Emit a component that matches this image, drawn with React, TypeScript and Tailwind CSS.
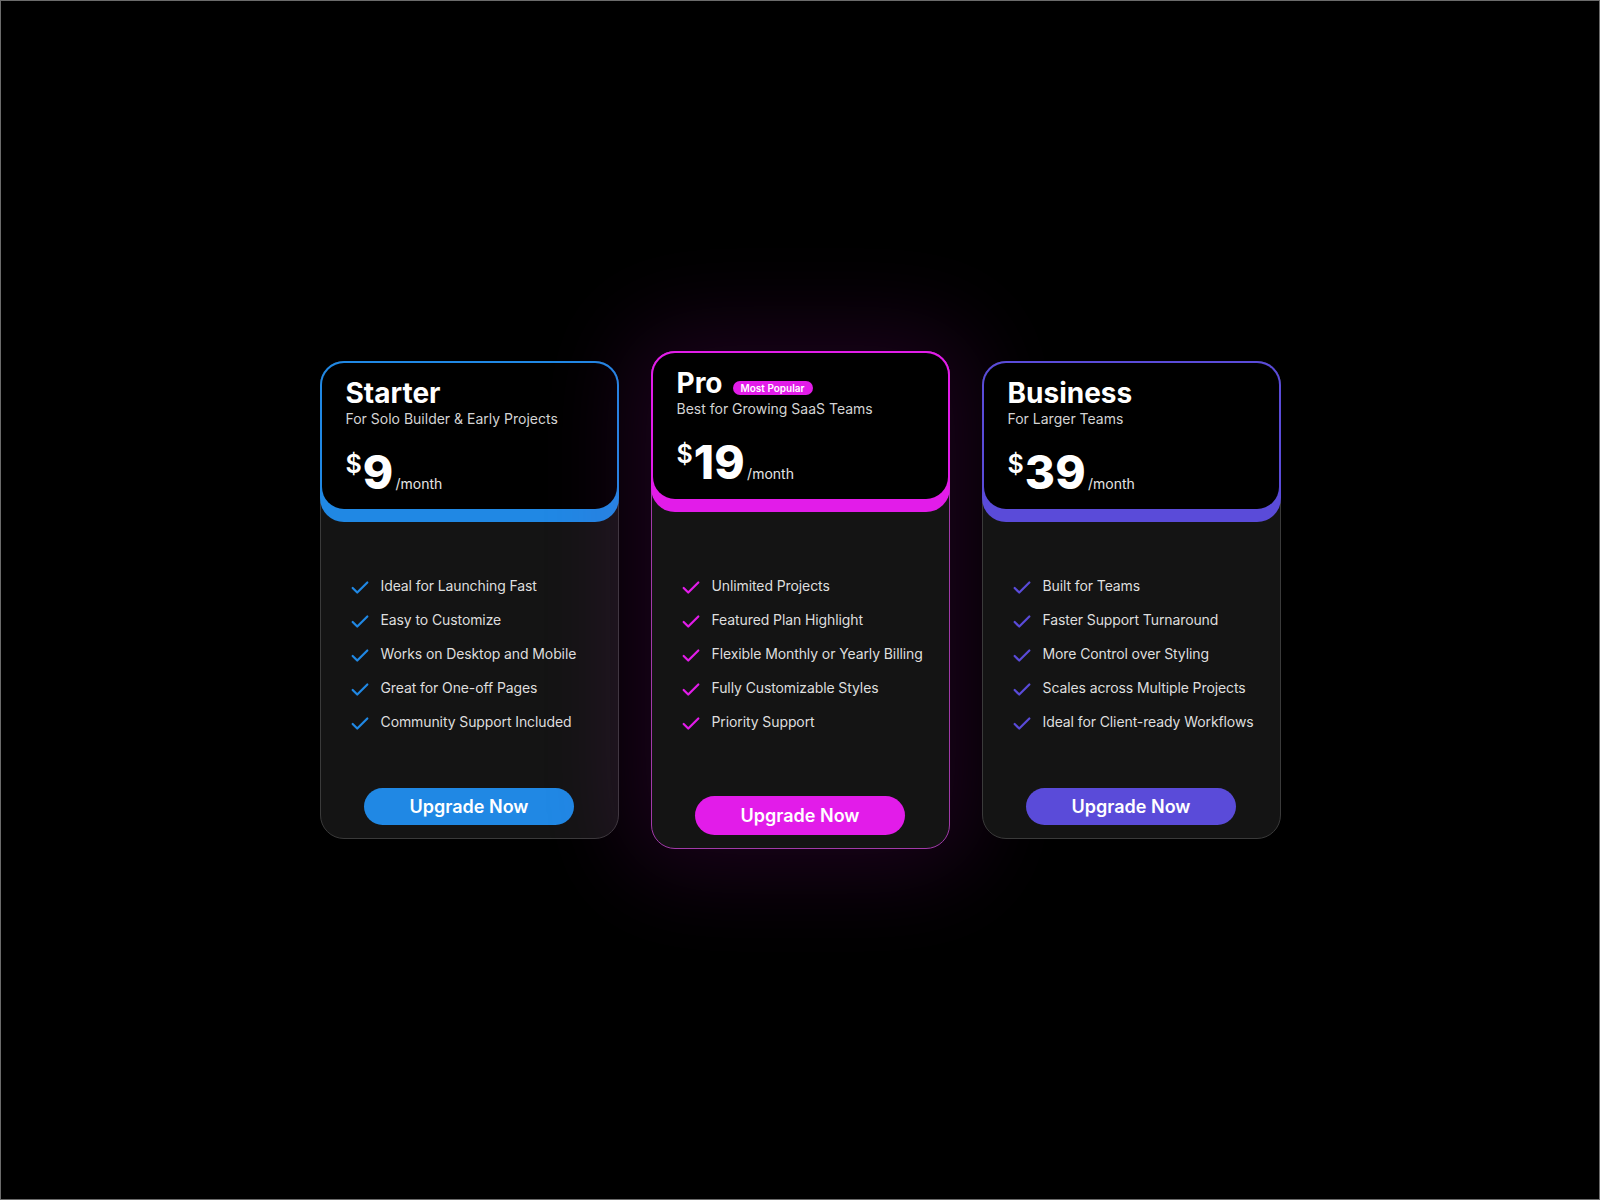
import { Check } from "lucide-react";

type Plan = {
  name: string;
  tagline: string;
  price: string;
  features: string[];
  popular?: boolean;
};

const plans: Plan[] = [
  {
    name: "Starter",
    tagline: "For Solo Builder & Early Projects",
    price: "9",
    features: [
      "Ideal for Launching Fast",
      "Easy to Customize",
      "Works on Desktop and Mobile",
      "Great for One-off Pages",
      "Community Support Included",
    ],
  },
  {
    name: "Pro",
    tagline: "Best for Growing SaaS Teams",
    price: "19",
    popular: true,
    features: [
      "Unlimited Projects",
      "Featured Plan Highlight",
      "Flexible Monthly or Yearly Billing",
      "Fully Customizable Styles",
      "Priority Support",
    ],
  },
  {
    name: "Business",
    tagline: "For Larger Teams",
    price: "39",
    features: [
      "Built for Teams",
      "Faster Support Turnaround",
      "More Control over Styling",
      "Scales across Multiple Projects",
      "Ideal for Client-ready Workflows",
    ],
  },
];

const theme = {
  Starter: {
    head: "bg-[#2088e4]",
    check: "text-[#2088e4]",
    button: "bg-[#2088e4]",
    card: "border-[#3a3a3a]",
  },
  Pro: {
    head: "bg-[#e21ce9]",
    check: "text-[#e21ce9]",
    button: "bg-[#e21ce9]",
    card: "border-[#a13aa9] shadow-[0_0_90px_25px_rgba(190,20,200,0.14)]",
  },
  Business: {
    head: "bg-[#5a4bd9]",
    check: "text-[#5a4bd9]",
    button: "bg-[#5a4bd9]",
    card: "border-[#3a3a3a]",
  },
} as const;

const PlanCard = ({ plan }: { plan: Plan }) => {
  const t = theme[plan.name as keyof typeof theme];
  return (
    <div className={`w-[299px] rounded-[24px] border bg-[#141414] ${t.card}`}>
      {/* Header */}
      <div className={`-mx-px -mt-px h-[161px] rounded-[24px] p-[2px] pb-[13px] ${t.head}`}>
        <div className="h-full rounded-[22px] bg-black px-6 pt-[14px]">
          <div className="flex items-end gap-[10px]">
            <h2 className="text-[28px] font-bold leading-[32px] text-white">
              {plan.name}
            </h2>
            {plan.popular && (
              <span className="mb-[4px] flex h-[14px] items-center rounded-full bg-[#e21ce9] px-[8px] text-[10px] font-semibold text-white">
                Most Popular
              </span>
            )}
          </div>
          <p className="text-sm leading-5 text-[#d4d4d4]">{plan.tagline}</p>
          <div className="mt-[20px] flex items-baseline text-white">
            <span className="relative -top-[16px] mr-[1px] text-[25px] font-semibold leading-none">
              $
            </span>
            <span className="text-[46px] font-extrabold leading-none tracking-[0.3px]">
              {plan.price}
            </span>
            <span className="ml-[2px] text-sm leading-none text-[#e5e5e5]">/month</span>
          </div>
        </div>
      </div>

      {/* Features */}
      <ul
        className={`flex flex-col gap-[14px] pl-[28px] ${
          plan.popular ? "pt-[64px]" : "pt-[54px]"
        }`}
      >
        {plan.features.map((f) => (
          <li key={f} className="flex h-5 items-center gap-[10px]">
            <Check size={22} strokeWidth={2.4} className={`${t.check} mt-[3px]`} />
            <span className="text-sm tracking-[-0.1px] text-[#dedede]">{f}</span>
          </li>
        ))}
      </ul>

      <div
        className={`flex justify-center pb-[13px] ${
          plan.popular ? "pt-[64px]" : "pt-[56px]"
        }`}
      >
        <button
          className={`w-[210px] rounded-full text-lg font-semibold text-white ${t.button} ${
            plan.popular ? "h-[39px]" : "h-[37px]"
          }`}
        >
          Upgrade Now
        </button>
      </div>
    </div>
  );
};

export default function App() {
  return (
    <div
      className="flex h-[1200px] w-full items-center justify-center border border-[#6b6b6b] bg-black"
      style={{ fontFamily: "Inter, 'Noto Sans', sans-serif" }}
    >
      <div className="flex items-center gap-[32px]">
        {plans.map((p) => (
          <PlanCard key={p.name} plan={p} />
        ))}
      </div>
    </div>
  );
}
